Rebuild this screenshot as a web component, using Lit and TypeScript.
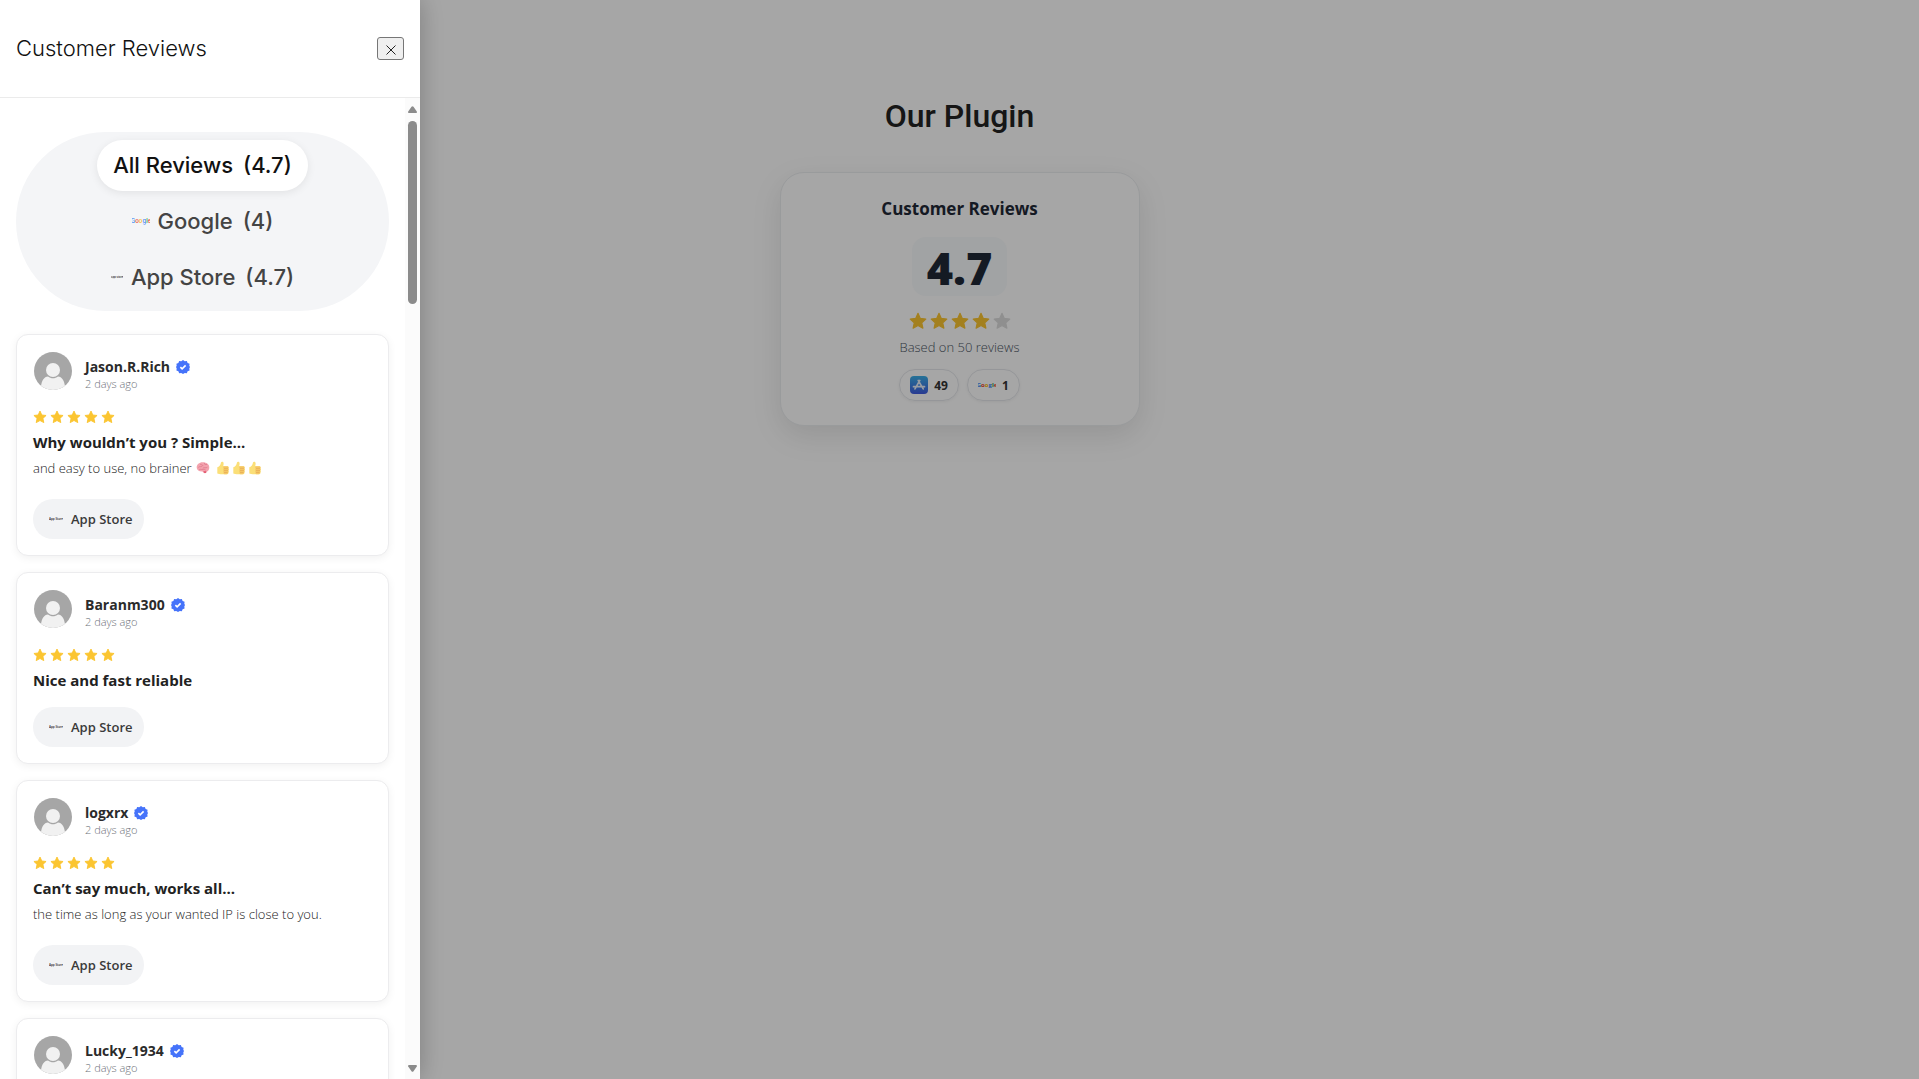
import { LitElement, html, css, nothing } from "lit";
import { customElement, property, state } from "lit/decorators.js";

interface Review {
  author: string;
  age: string;
  title: string;
  body?: string;
  emoji?: boolean;
}

const REVIEWS: Review[] = [
  { author: "Jason.R.Rich", age: "2 days ago", title: "Why wouldn’t you ? Simple...", body: "and easy to use, no brainer", emoji: true },
  { author: "Baranm300", age: "2 days ago", title: "Nice and fast reliable" },
  { author: "logxrx", age: "2 days ago", title: "Can’t say much, works all...", body: "the time as long as your wanted IP is close to you." },
  { author: "Lucky_1934", age: "2 days ago", title: "" },
];

const star = (on: boolean) => html`<svg class="star ${on ? "" : "off"}" viewBox="0 0 24 24" aria-hidden="true">
  <path d="M12 1.800l3.100 6.800 7.300.8-5.400 5 1.500 7.200L12 18l-6.500 3.600L7 14.400l-5.400-5 7.300-.8z" />
</svg>`;

const stars = (count: number) => html`<div class="stars" role="img" aria-label="${count} out of 5 stars">
  ${[1, 2, 3, 4, 5].map((n) => star(n <= count))}
</div>`;

const googleLogo = () => html`<svg class="google" viewBox="0 0 18 8" aria-hidden="true">
  <text x="9" y="6" text-anchor="middle" font-size="6"><tspan fill="#4285f4">G</tspan><tspan fill="#ea4335">o</tspan><tspan fill="#fbbc05">o</tspan><tspan fill="#4285f4">g</tspan><tspan fill="#34a853">l</tspan><tspan fill="#ea4335">e</tspan></text>
</svg>`;

const storeMark = () => html`<svg class="mark" viewBox="0 0 14 6" aria-hidden="true">
  <text x="7" y="4" text-anchor="middle" font-size="3" font-weight="600" fill="#222">App Store</text>
</svg>`;

const storeIcon = () => html`<svg class="store" viewBox="0 0 18 18" aria-hidden="true">
  <defs>
    <linearGradient id="sky" x1="0" y1="0" x2="0" y2="1">
      <stop offset="0" stop-color="#3bb0e8" />
      <stop offset="1" stop-color="#3f5be0" />
    </linearGradient>
  </defs>
  <rect width="18" height="18" rx="4" fill="url(#sky)" />
  <path d="M9.800 4.400L5 12.900M8.200 4.400l5 8.500M3.500 10.700h7M12 10.700h2.500" stroke="#e8f0fa" stroke-width="1.700" stroke-linecap="round" fill="none" />
</svg>`;

const brain = () => html`<svg class="emoji brain" viewBox="0 0 16 16" role="img" aria-label="brain">
  <path d="M.8 7.600C.6 4 3.800 1.600 7.300 1.500c4.700-.2 7.900 2.400 7.900 5.800 0 2.600-1.300 4.300-3 4.800.1 1.400-1.200 2.200-2.400 1.800-1-.3-1.800-1-2.400-1.900C3.500 12.200 1 10.300.8 7.600z" fill="#f3a3ae" />
  <path d="M3 7c1.500-1.500 2.500.5 4-1M5 3.800c1 1 2.500.2 3.200 1.600M9.500 2.800c-.5 1.500 1.500 1.600 2.800 1.200M8 8c1.500-1.200 3 .6 4.700-.6M4 9.700c1.200-.8 2.600.4 4 0s2.400 0 3 .7" stroke="#dc7488" stroke-width=".8" fill="none" stroke-linecap="round" />
  <path d="M8.500 11.800h3.300c.2 1.300-.8 2.100-1.800 2-.8-.1-1.300-1-1.500-2z" fill="#e2566c" />
</svg>`;

const thumb = () => html`<svg class="emoji" viewBox="0 0 16 16" role="img" aria-label="thumbs up">
  <path d="M1.500 7.200c2-.6 3.800-2.200 4.200-5.400C5.900.5 8.500.4 8.700 2.600c.1 1.300-.2 2.400-.5 3.400h4.500c1.200 0 1.800.8 1.700 1.800v5c0 1.500-.8 2.400-2.400 2.400H5.500c-1.500 0-2.500-.5-4-.8z" fill="#fbdf78" />
  <path d="M8.500 6h4.500c1.700.2 1.800 2 .7 2.400 1.300.6 1 2.200 0 2.500.9.700.6 2-.3 2.200.4 1-.2 2-1.500 2H9.500c-1-.4-1.200-1.600-.5-2.100-1-.5-1-1.800-.1-2.300-.9-.6-.8-1.900.1-2.300C8 7.900 8 6.500 8.500 6z" fill="#f5c866" />
  <path d="M9 8.400h4.700M9 10.800h4.700M9 13.100h4.300" stroke="#e3a04e" stroke-width=".6" />
</svg>`;

const shared = css`
  :host {
    display: block;
    font-family: "Open Sans", "Noto Sans", sans-serif;
  }
  * {
    box-sizing: border-box;
  }
  svg {
    display: block;
    flex: none;
  }
  h1, h2, h3, p {
    margin: 0;
  }
  .stars {
    display: flex;
    gap: 3px;
  }
  .star {
    fill: #fbc531;
    stroke: #fbc531;
    stroke-width: 1.6;
    stroke-linejoin: round;
  }
  .google {
    width: 18px;
    height: 8px;
  }
`;

@customElement("review-card")
class ReviewCard extends LitElement {
  @property({ attribute: false }) review!: Review;

  static styles = [
    shared,
    css`
      .card {
        border: 1px solid #ececee;
        border-radius: 12px;
        padding: 16px;
        background: #fff;
        box-shadow: 0 2px 8px rgba(0, 0, 0, 0.06);
      }
      .head {
        display: flex;
        gap: 12px;
        height: 40px;
      }
      .avatar {
        width: 40px;
        height: 40px;
      }
      .who {
        display: flex;
        flex-direction: column;
        padding-top: 6px;
      }
      .name {
        display: flex;
        align-items: center;
        gap: 6px;
        font-size: 14px;
        line-height: 20px;
        font-weight: 700;
        color: #2b2b2b;
      }
      .badge {
        width: 14px;
        height: 14px;
      }
      .age {
        font-size: 11px;
        line-height: 14px;
        font-weight: 300;
        color: #6f737b;
      }
      .stars {
        margin-top: 19px;
      }
      .star {
        width: 14px;
        height: 14px;
      }
      .title {
        min-height: 22px;
        margin-top: 7px;
        font-size: 15px;
        line-height: 22px;
        font-weight: 700;
        color: #222;
      }
      .body {
        display: flex;
        align-items: center;
        height: 30px;
        font-size: 13px;
        line-height: 22px;
        font-weight: 300;
        color: #222;
      }
      .emoji {
        width: 14px;
        height: 14px;
        margin-right: 2px;
      }
      .brain {
        margin: 0 6px 0 4px;
      }
      .source {
        display: inline-flex;
        align-items: center;
        gap: 8px;
        height: 40px;
        margin-top: 16px;
        padding: 0 12px 0 16px;
        border-radius: 20px;
        background: #f2f3f5;
        font-size: 13px;
        font-weight: 600;
        color: #3a3a3a;
        vertical-align: top;
      }
      .mark {
        width: 14px;
        height: 6px;
      }
    `,
  ];

  render() {
    const r = this.review;
    return html`<article class="card">
      <div class="head">
        <svg class="avatar" viewBox="0 0 40 40" aria-hidden="true">
          <clipPath id="disc"><circle cx="20" cy="20" r="19" /></clipPath>
          <circle cx="20" cy="20" r="19" fill="#a6a6a6" />
          <g clip-path="url(#disc)" fill="#f1f1f1">
            <circle cx="20" cy="19" r="7" />
            <path d="M8 35c1-6 3-9 7-9.500 3 2.400 7 2.400 10 0 4 .5 6 3.500 7 9.500v5H8z" />
          </g>
        </svg>
        <div class="who">
          <div class="name">
            ${r.author}
            <svg class="badge" viewBox="0 0 24 24" role="img" aria-label="Verified">
              <path fill="#4573fa" d="M12 0l3 2.200 3.600-.5 1.300 3.400 3.400 1.300-.5 3.600L24 12l-1.200 2.500.5 3.600-3.400 1.300-1.300 3.400-3.600-.5L12 24l-3-1.700-3.600.5-1.300-3.400-3.400-1.300.5-3.600L0 12l1.200-2L.7 6.400l3.400-1.300 1.300-3.400 3.600.5z" />
              <path d="M7.500 12.300l3 3 6-6" fill="none" stroke="#fff" stroke-width="2.800" />
            </svg>
          </div>
          <div class="age">${r.age}</div>
        </div>
      </div>
      ${stars(5)}
      <h3 class="title">${r.title}</h3>
      ${r.body ? html`<p class="body">${r.body}${r.emoji ? html`${brain()}${thumb()}${thumb()}${thumb()}` : nothing}</p>` : nothing}
      <div class="source">${storeMark()}<span>App Store</span></div>
    </article>`;
  }
}

@customElement("reviews-drawer")
class ReviewsDrawer extends LitElement {
  @state() private tab = "all";

  static styles = [
    shared,
    css`
      .drawer {
        display: flex;
        flex-direction: column;
        height: 100%;
        background: #fff;
      }
      .top {
        display: flex;
        align-items: center;
        justify-content: space-between;
        flex: none;
        height: 98px;
        padding: 0 16px;
        border-bottom: 1px solid #ebebeb;
        font-family: Inter, sans-serif;
      }
      .heading {
        padding-bottom: 2px;
        font-size: 22px;
        line-height: 30px;
        font-weight: 300;
        color: #111;
      }
      .close {
        display: grid;
        place-items: center;
        width: 27px;
        height: 23px;
        padding: 2px 0 0;
        border: 1px solid #767676;
        border-radius: 3px;
        background: #efefef;
      }
      .close svg {
        width: 10px;
        height: 10px;
      }
      .main {
        display: flex;
        flex: 1;
        min-height: 0;
      }
      .list {
        display: flex;
        flex-direction: column;
        gap: 16px;
        flex: 1;
        min-width: 0;
        padding: 34px 16px 16px;
        overflow-y: auto;
        scrollbar-width: none;
      }
      .tabs {
        display: flex;
        flex-direction: column;
        align-items: center;
        flex: none;
        gap: 5px;
        margin-bottom: 7px;
        padding: 8px;
        border-radius: 91px;
        background: #f4f5f7;
      }
      .tab {
        display: flex;
        align-items: center;
        gap: 8px;
        height: 51px;
        padding: 0 16px 1px;
        border: 0;
        border-radius: 26px;
        background: none;
        font: 500 22px/30px Inter, sans-serif;
        color: #444;
      }
      .tab.on {
        background: #fff;
        color: #111;
        box-shadow: 0 2px 8px rgba(0, 0, 0, 0.08);
      }
      .score {
        margin-left: 2px;
      }
      .mark {
        width: 12px;
        height: 6px;
      }
      .rail {
        display: flex;
        flex-direction: column;
        align-items: center;
        flex: none;
        width: 15px;
        padding: 8px 0 7px;
        background: #fbfbfb;
      }
      .rail svg {
        width: 9px;
        height: 7px;
        fill: #8b8b8b;
      }
      .track {
        flex: 1;
        width: 9px;
        margin: 8px 0;
      }
      .thumb {
        height: 19.5%;
        border-radius: 5px;
        background: #8b8b8b;
      }
    `,
  ];

  private tabButton(id: string, label: string, score: string, icon: unknown) {
    return html`<button class="tab ${this.tab === id ? "on" : ""}" role="tab" aria-selected=${this.tab === id} @click=${() => (this.tab = id)}>
      ${icon}<span>${label}</span><span class="score">(${score})</span>
    </button>`;
  }

  render() {
    return html`<aside class="drawer">
      <header class="top">
        <h2 class="heading">Customer Reviews</h2>
        <button class="close" aria-label="Close">
          <svg viewBox="0 0 10 10"><path d="M.5.5l9 9M9.500.5l-9 9" stroke="#222" /></svg>
        </button>
      </header>
      <div class="main">
        <div class="list">
          <div class="tabs" role="tablist">
            ${this.tabButton("all", "All Reviews", "4.7", nothing)}
            ${this.tabButton("google", "Google", "4", googleLogo())}
            ${this.tabButton("store", "App Store", "4.7", storeMark())}
          </div>
          ${REVIEWS.map((r) => html`<review-card .review=${r}></review-card>`)}
        </div>
        <div class="rail" aria-hidden="true">
          <svg viewBox="0 0 9 7"><path d="M3.500 .8q1-1.200 2 0L8.800 5.500q.4 1.500-.8 1.500H1Q-.2 7 .2 5.500z" /></svg>
          <div class="track"><div class="thumb"></div></div>
          <svg viewBox="0 0 9 7"><path d="M3.500 6.200q1 1.200 2 0L8.800 1.500Q9.200 0 8 0H1Q-.2 0 .2 1.500z" /></svg>
        </div>
      </div>
    </aside>`;
  }
}

@customElement("rating-summary")
class RatingSummary extends LitElement {
  static styles = [
    shared,
    css`
      .panel {
        display: flex;
        flex-direction: column;
        align-items: center;
        padding: 24px;
        border: 1px solid #eceef0;
        border-radius: 24px;
        background: #fff;
        box-shadow: 0 10px 30px rgba(0, 0, 0, 0.1);
      }
      .title {
        font-size: 17px;
        line-height: 24px;
        font-weight: 700;
        color: #1f2937;
      }
      .score {
        margin-top: 16px;
        padding: 2px 15px 0;
        border-radius: 14px;
        background: #f8fafc;
        font-size: 45px;
        line-height: 57px;
        font-weight: 800;
        color: #1f2937;
      }
      .stars {
        margin-top: 16px;
      }
      .star {
        width: 18px;
        height: 18px;
      }
      .star.off {
        fill: #dcdcdc;
        stroke: #dcdcdc;
      }
      .count {
        margin-top: 7px;
        font-size: 13px;
        line-height: 20px;
        font-weight: 300;
        color: #4b5563;
      }
      .chips {
        display: flex;
        gap: 8px;
        margin-top: 12px;
      }
      .chip {
        display: flex;
        align-items: center;
        gap: 6px;
        height: 32px;
        padding: 0 10px;
        border: 1px solid #e5e7eb;
        border-radius: 16px;
        box-shadow: 0 1px 3px rgba(0, 0, 0, 0.06);
        font-size: 12px;
        font-weight: 700;
        color: #333;
      }
      .store {
        width: 18px;
        height: 18px;
      }
    `,
  ];

  render() {
    return html`<section class="panel">
      <h2 class="title">Customer Reviews</h2>
      <div class="score">4.7</div>
      ${stars(4)}
      <p class="count">Based on 50 reviews</p>
      <div class="chips">
        <span class="chip">${storeIcon()}<span>49</span></span>
        <span class="chip">${googleLogo()}<span>1</span></span>
      </div>
    </section>`;
  }
}

@customElement("app-root")
class AppRoot extends LitElement {
  static styles = [
    shared,
    css`
      .page {
        display: flex;
        flex-direction: column;
        align-items: center;
        min-height: 100vh;
        padding: 96px 16px 16px;
        background: #fff;
      }
      .title {
        margin-bottom: 36px;
        font: 500 32px/40px Roboto, sans-serif;
        color: #222;
      }
      .summary {
        width: 100%;
        max-width: 360px;
      }
      .shade {
        position: fixed;
        inset: 0;
        background: rgba(0, 0, 0, 0.35);
      }
      .panel {
        position: fixed;
        inset: 0 auto 0 0;
        width: 420px;
        max-width: 100%;
        box-shadow: 0 0 24px rgba(0, 0, 0, 0.25);
      }
    `,
  ];

  render() {
    return html`<main class="page">
        <h1 class="title">Our Plugin</h1>
        <rating-summary class="summary"></rating-summary>
      </main>
      <div class="shade"></div>
      <reviews-drawer class="panel"></reviews-drawer>`;
  }
}
